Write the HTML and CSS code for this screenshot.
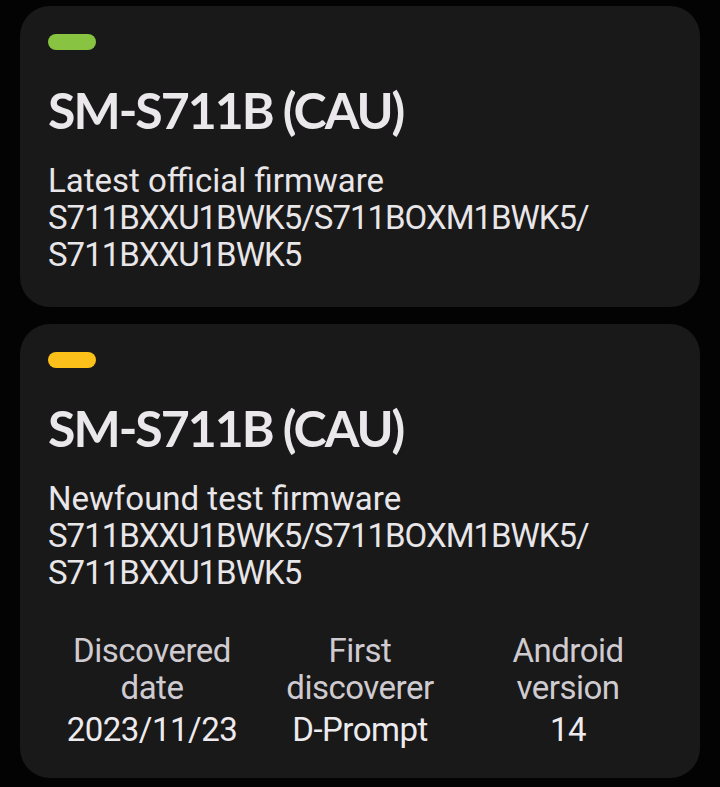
FILE: index.html
```html
<!doctype html>
<html>
<head>
<meta charset="utf-8">
<title>Firmware</title>
<link rel="stylesheet" href="styles.css">
</head>
<body>
	<div class="card">
		<div class="pill pill-green"></div>
		<div class="model">SM-S711B (CAU)</div>
		<div class="info">
			<div>Latest official firmware</div>
			<div class="code">S711BXXU1BWK5/<wbr>S711BOXM1BWK5/<wbr>S711BXXU1BWK5</div>
		</div>
	</div>
	<div class="card">
		<div class="pill pill-yellow"></div>
		<div class="model">SM-S711B (CAU)</div>
		<div class="info">
			<div>Newfound test firmware</div>
			<div class="code">S711BXXU1BWK5/<wbr>S711BOXM1BWK5/<wbr>S711BXXU1BWK5</div>
		</div>
		<div class="details">
			<div class="col">
				<div class="label">Discovered date</div>
				<div class="value">2023/11/23</div>
			</div>
			<div class="col">
				<div class="label">First discoverer</div>
				<div class="value">D-Prompt</div>
			</div>
			<div class="col">
				<div class="label">Android version</div>
				<div class="value">14</div>
			</div>
		</div>
	</div>
</body>
</html>
```
FILE: styles.css
```css
*{
	margin:0;
	padding:0;
}
body{
	background:#030303;
	color:#e9e6e9;
	font-family:Roboto, "Noto Sans", sans-serif;
	padding-top:6px;
}
.card{
	background:#191919;
	border-radius:30px;
	margin:0 20px 17px;
	padding:28px 28px 34px;
}
.pill{
	width:48px;
	height:16px;
	border-radius:8px;
}
.pill-green{ background:#88c441; }
.pill-yellow{ background:#fbc01a; }
.model{
	font-family:Lato, "Open Sans", sans-serif;
	font-weight:bold;
	font-size:50px;
	letter-spacing:-2px;
	line-height:59px;
	margin-top:31px;
	color:#ebe8eb;
}
.info{
	font-size:33px;
	line-height:37px;
	margin-top:22px;
}
.code{
	letter-spacing:-1px;
}
.details{
	display:grid;
	grid-template-columns:repeat(3, minmax(0, 1fr));
	text-align:center;
	font-size:33px;
	line-height:37px;
	margin-top:41px;
	margin-bottom:-4px;
}
.label{
	color:#cfcbd0;
	letter-spacing:-0.5px;
}
.value{
	margin-top:5px;
	color:#eeebee;
	letter-spacing:-0.5px;
}
```
